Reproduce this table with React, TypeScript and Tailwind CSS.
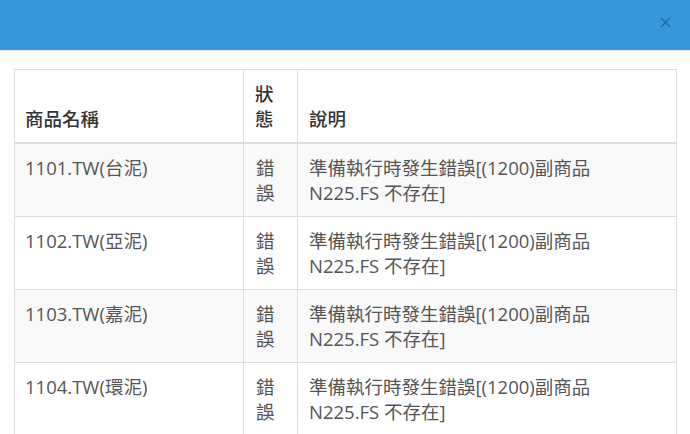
import React from "react";

const rows = [
  { name: "1101.TW(台泥)" },
  { name: "1102.TW(亞泥)" },
  { name: "1103.TW(嘉泥)" },
  { name: "1104.TW(環泥)" },
];

const font = {
  fontFamily: '"Open Sans", "Noto Sans CJK TC", sans-serif',
};

export default function App() {
  return (
    <div className="w-[690px] h-[434px] overflow-hidden bg-white" style={font}>
      <div className="h-[51px] bg-[#3498db] border-b border-[#e5e5e5] flex items-start justify-end pr-[19px] pt-[17px]">
        <svg width="11" height="11" viewBox="0 0 11 11" className="opacity-30">
          <path d="M1 1 L10 10 M10 1 L1 10" stroke="#000" strokeWidth="1.2" />
        </svg>
      </div>
      <div className="pt-[18px] px-[14px]">
        <table className="w-[662px] border-collapse text-[18.5px] leading-[25px] text-[#555] table-fixed">
          <colgroup>
            <col className="w-[229px]" />
            <col className="w-[54px]" />
            <col className="w-[379px]" />
          </colgroup>
          <thead>
            <tr className="text-[#333]">
              <th className="border border-[#ddd] border-b-2 text-left align-bottom pl-[10px] pr-[6px] pt-[11px] pb-[11px] font-medium">
                商品名稱
              </th>
              <th className="border border-[#ddd] border-b-2 text-left align-bottom pl-[11px] pr-[4px] pt-[11px] pb-[11px] font-medium">
                狀
                <br />
                態
              </th>
              <th className="border border-[#ddd] border-b-2 text-left align-bottom pl-[11px] pr-[6px] pt-[11px] pb-[11px] font-medium">
                說明
              </th>
            </tr>
          </thead>
          <tbody>
            {rows.map((r, i) => (
              <tr key={r.name} className={i % 2 === 0 ? "bg-[#f9f9f9]" : "bg-white"}>
                <td className="border border-[#ddd] align-top pl-[10px] pr-[6px] pt-[11px] pb-[11px]">{r.name}</td>
                <td className="border border-[#ddd] align-top pl-[12px] pr-[4px] pt-[11px] pb-[11px]">
                  錯
                  <br />
                  誤
                </td>
                <td className="border border-[#ddd] align-top pl-[11px] pr-[6px] pt-[11px] pb-[11px]">
                  準備執行時發生錯誤[(1200)副商品
                  <br />
                  N225.FS 不存在]
                </td>
              </tr>
            ))}
          </tbody>
        </table>
      </div>
    </div>
  );
}
